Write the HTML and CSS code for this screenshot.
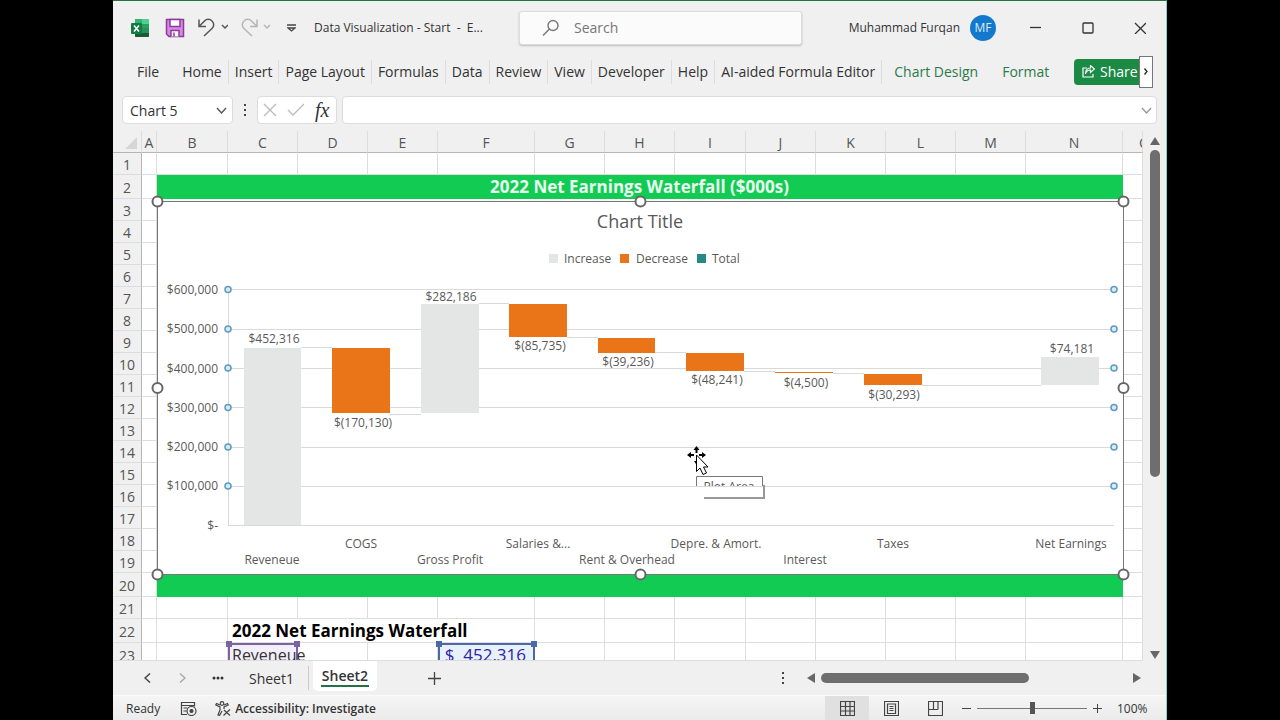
FILE: index.html
```html
<!DOCTYPE html>
<html lang="en">
<head>
  <meta charset="UTF-8">
  <title>Data Visualization - Start - Excel</title>
  <link rel="stylesheet" href="styles.css">
</head>
<body>

<div class="window">

  <!-- Title bar -->
  <header class="titlebar">
    <div class="quick-access">
      <svg class="logo" width="18" height="18" viewBox="0 0 18 18">
        <rect x="4" y="0" width="14" height="18" rx="1" fill="#21a366"/>
        <path d="M4 0h7v5H4z" fill="#2fb574"/>
        <path d="M11 0h7v5h-7z" fill="#4fd08e"/>
        <path d="M4 9h7v5H4z" fill="#107c41"/>
        <path d="M11 9h7v5h-7z" fill="#2b8f57"/>
        <path d="M4 14h14v3a1 1 0 0 1-1 1H5a1 1 0 0 1-1-1z" fill="#185c37"/>
        <rect x="0" y="4" width="11" height="11" rx="1" fill="#107c41"/>
        <path d="M3 6.500l5 6M8 6.500l-5 6" stroke="#fff" stroke-width="1.600"/>
      </svg>
      <button class="icon-btn" aria-label="Save">
        <svg width="20" height="20" viewBox="0 0 20 20" fill="none" stroke="#8e3a9d" stroke-width="1.500">
          <path d="M1.500 1.500h17v17H4l-2.500-2.500z" fill="#d58be0"/>
          <path d="M5 1.500h10v7H5z" fill="#fff"/>
          <path d="M6 18.500v-6h8v6" fill="#fff"/>
          <path d="M9 14.500v4"/>
        </svg>
      </button>
      <button class="icon-btn" aria-label="Undo">
        <svg width="32" height="20" viewBox="0 0 32 20" fill="none" stroke="#555" stroke-width="1.500">
          <path d="M3 1.500v7h7M3 8.500l5.500-5.500a5 5 0 0 1 7.500 0a5 5 0 0 1 0 7.500L8 18"/>
          <path d="M26 7l3 3 3-3"/>
        </svg>
      </button>
      <button class="icon-btn" aria-label="Redo">
        <svg width="32" height="20" viewBox="0 0 32 20" fill="none" stroke="#b5b5b5" stroke-width="1.500">
          <path d="M18 1.500v7h-7M18 8.500L12.500 3a5 5 0 0 0-7.500 0a5 5 0 0 0 0 7.500L13 18"/>
          <path d="M25 7l3 3 3-3"/>
        </svg>
      </button>
      <button class="icon-btn customize" aria-label="Customize toolbar">
        <svg width="9" height="8" viewBox="0 0 9 8" fill="none" stroke="#444" stroke-width="1.300">
          <path d="M0 1h9M1 4h7L4.500 7z"/>
        </svg>
      </button>
    </div>
    <span class="doc-name">Data Visualization - Start&nbsp; -&nbsp; E...</span>
    <label class="search">
      <svg width="18" height="18" viewBox="0 0 18 18" fill="none" stroke="#777" stroke-width="1.400">
        <circle cx="11" cy="6.500" r="5"/>
        <path d="M7.500 10L1 16.500"/>
      </svg>
      <input type="text" placeholder="Search" aria-label="Search">
    </label>
    <span class="user">Muhammad Furqan</span>
    <span class="avatar">MF</span>
    <div class="window-buttons">
      <button aria-label="Minimize"><svg width="12" height="12"><path d="M0 5.500h11"/></svg></button>
      <button aria-label="Maximize"><svg width="12" height="12"><rect x="1" y="1" width="10" height="10" rx="1"/></svg></button>
      <button aria-label="Close"><svg width="12" height="12"><path d="M1 1l11 11M12 1L1 12"/></svg></button>
    </div>
  </header>

  <!-- Ribbon tabs -->
  <nav class="ribbon">
    <a href="#">File</a>
    <a href="#" class="sep">Home</a>
    <a href="#" class="sep">Insert</a>
    <a href="#" class="sep">Page Layout</a>
    <a href="#" class="sep">Formulas</a>
    <a href="#" class="sep">Data</a>
    <a href="#" class="sep">Review</a>
    <a href="#" class="sep">View</a>
    <a href="#" class="sep">Developer</a>
    <a href="#" class="sep">Help</a>
    <a href="#" class="sep">AI-aided Formula Editor</a>
    <a href="#" class="context">Chart Design</a>
    <a href="#" class="context">Format</a>
    <div class="share-group">
      <button class="share">
        <svg width="13" height="13" viewBox="0 0 13 13" fill="none" stroke="#fff" stroke-width="1.200">
          <path d="M5 3H1v9h10V9"/>
          <path d="M3.500 9c.5-3 2-4 5-4V7.500l4-3.500-4-3.500V3c-3 0-5 2-5 6z"/>
        </svg>
        Share
      </button>
      <button class="more" aria-label="More tabs">
        <svg width="4" height="7" viewBox="0 0 4 7" fill="none" stroke="#222" stroke-width="1.300"><path d="M.5.500l2.500 3-2.500 3"/></svg>
      </button>
    </div>
  </nav>

  <!-- Name box and formula bar -->
  <div class="formula-row">
    <div class="name-box">
      <input type="text" value="Chart 5" aria-label="Name box">
      <svg width="11" height="7" viewBox="0 0 11 7" fill="none" stroke="#555" stroke-width="1.400"><path d="M1 1l4.500 5L10 1"/></svg>
    </div>
    <svg class="dots" width="4" height="14" viewBox="0 0 4 14" fill="#444"><path d="M1 1h2v2H1zM1 6h2v2H1zM1 11h2v2H1z"/></svg>
    <div class="fx-box">
      <button class="icon-btn" aria-label="Cancel"><svg width="14" height="14" viewBox="0 0 14 14" fill="none" stroke="#bbb" stroke-width="1.300"><path d="M1 1l12 12M13 1L1 13"/></svg></button>
      <button class="icon-btn" aria-label="Enter"><svg width="18" height="14" viewBox="0 0 18 14" fill="none" stroke="#bbb" stroke-width="1.300"><path d="M1 7l5 5L17 1"/></svg></button>
      <button class="icon-btn fx" aria-label="Insert function">fx</button>
    </div>
    <div class="formula">
      <input type="text" aria-label="Formula bar">
      <svg width="11" height="7" viewBox="0 0 11 7" fill="none" stroke="#999" stroke-width="1.400"><path d="M1 1l4.500 5L10 1"/></svg>
    </div>
  </div>

  <!-- Worksheet -->
  <main class="sheet">
    <div class="grid">
      <table class="cells">
        <colgroup>
          <col class="w-num"><col class="w-a"><col class="w-b"><col class="w-m"><col class="w-m"><col class="w-m"><col class="w-l">
          <col class="w-m"><col class="w-m"><col class="w-b"><col class="w-m"><col class="w-m"><col class="w-m"><col class="w-m"><col class="w-l"><col>
        </colgroup>
        <thead>
          <tr>
            <th class="corner"><svg width="12" height="12"><path d="M12 0v12H0z" fill="#d6d6d6"/></svg></th>
            <th>A</th><th>B</th><th>C</th><th>D</th><th>E</th><th>F</th><th>G</th><th>H</th><th>I</th><th>J</th><th>K</th><th>L</th><th>M</th><th>N</th><th class="cut">O</th>
          </tr>
        </thead>
        <tbody>
          <tr><th>1</th><td></td><td></td><td></td><td></td><td></td><td></td><td></td><td></td><td></td><td></td><td></td><td></td><td></td><td></td><td></td></tr>
          <tr class="tall"><th>2</th><td></td><td colspan="13" class="banner">2022 Net Earnings Waterfall ($000s)</td><td></td></tr>
          <tr><th>3</th><td></td><td colspan="13"></td><td></td></tr>
          <tr><th>4</th><td></td><td colspan="13"></td><td></td></tr>
          <tr><th>5</th><td></td><td colspan="13"></td><td></td></tr>
          <tr><th>6</th><td></td><td colspan="13"></td><td></td></tr>
          <tr><th>7</th><td></td><td colspan="13"></td><td></td></tr>
          <tr><th>8</th><td></td><td colspan="13"></td><td></td></tr>
          <tr><th>9</th><td></td><td colspan="13"></td><td></td></tr>
          <tr><th>10</th><td></td><td colspan="13"></td><td></td></tr>
          <tr><th>11</th><td></td><td colspan="13"></td><td></td></tr>
          <tr><th>12</th><td></td><td colspan="13"></td><td></td></tr>
          <tr><th>13</th><td></td><td colspan="13"></td><td></td></tr>
          <tr><th>14</th><td></td><td colspan="13"></td><td></td></tr>
          <tr><th>15</th><td></td><td colspan="13"></td><td></td></tr>
          <tr><th>16</th><td></td><td colspan="13"></td><td></td></tr>
          <tr><th>17</th><td></td><td colspan="13"></td><td></td></tr>
          <tr><th>18</th><td></td><td colspan="13"></td><td></td></tr>
          <tr><th>19</th><td></td><td colspan="13"></td><td></td></tr>
          <tr class="tall"><th>20</th><td></td><td colspan="13" class="banner"></td><td></td></tr>
          <tr><th>21</th><td></td><td></td><td></td><td></td><td></td><td></td><td></td><td></td><td></td><td></td><td></td><td></td><td></td><td></td><td></td></tr>
          <tr class="tall"><th>22</th><td></td><td></td><td colspan="4" class="heading">2022 Net Earnings Waterfall</td><td></td><td></td><td></td><td></td><td></td><td></td><td></td><td></td><td></td></tr>
          <tr class="tall"><th>23</th><td></td><td></td><td class="range label">Reveneue</td><td></td><td></td><td class="range amount">$&nbsp; 452,316</td><td></td><td></td><td></td><td></td><td></td><td></td><td></td><td></td><td></td></tr>
        </tbody>
      </table>

      <!-- Waterfall chart, floating over the cells -->
      <svg class="chart" width="967" height="374" viewBox="0 0 967 374">
        <rect class="frame" x="0.500" y="0.500" width="966" height="373"/>
        <text class="title" x="483" y="27">Chart Title</text>

        <g class="legend">
          <rect class="up" x="392" y="53" width="9" height="9"/><text x="407" y="62">Increase</text>
          <rect class="down" x="463" y="53" width="9" height="9"/><text x="479" y="62">Decrease</text>
          <rect class="total" x="540" y="53" width="9" height="9"/><text x="555" y="62">Total</text>
        </g>

        <path class="gridlines" d="M71 88.500h886M71 128.500h886M71 167.500h886M71 206.500h886M71 246.500h886M71 285.500h886M71 324.500h886M71.500 88v236"/>

        <g class="axis">
          <text x="61" y="93">$600,000</text>
          <text x="61" y="132">$500,000</text>
          <text x="61" y="172">$400,000</text>
          <text x="61" y="211">$300,000</text>
          <text x="61" y="250">$200,000</text>
          <text x="61" y="289">$100,000</text>
          <text x="61" y="329">$-</text>
        </g>

        <path class="connectors" d="M144 146.500h31M233 213.500h31M322 102.500h30M410 136.500h31M498 151.500h31M587 170.500h31M676 172.500h31M765 184.500h119"/>
        <rect class="up" x="87" y="147" width="57" height="177"/>
        <rect class="down" x="175" y="147" width="58" height="65"/>
        <rect class="up" x="264" y="103" width="58" height="109"/>
        <rect class="down" x="352" y="103" width="58" height="33"/>
        <rect class="down" x="441" y="137" width="57" height="15"/>
        <rect class="down" x="529" y="152" width="58" height="18"/>
        <rect class="down" x="618" y="171" width="58" height="1"/>
        <rect class="down" x="707" y="173" width="58" height="11"/>
        <rect class="up" x="884" y="156" width="58" height="28"/>

        <g class="labels">
          <text x="117" y="142">$452,316</text>
          <text x="206" y="226">$(170,130)</text>
          <text x="294" y="100">$282,186</text>
          <text x="383" y="149">$(85,735)</text>
          <text x="471" y="165">$(39,236)</text>
          <text x="560" y="183">$(48,241)</text>
          <text x="649" y="186">$(4,500)</text>
          <text x="737" y="198">$(30,293)</text>
          <text x="915" y="152">$74,181</text>
        </g>
        <g class="labels">
          <text x="115" y="363">Reveneue</text>
          <text x="204" y="347">COGS</text>
          <text x="293" y="363">Gross Profit</text>
          <text x="381" y="347">Salaries &amp;...</text>
          <text x="470" y="363">Rent &amp; Overhead</text>
          <text x="559" y="347">Depre. &amp; Amort.</text>
          <text x="648" y="363">Interest</text>
          <text x="736" y="347">Taxes</text>
          <text x="914" y="347">Net Earnings</text>
        </g>

        <g class="points">
          <circle cx="71" cy="88.500" r="3"/><circle cx="957" cy="88.500" r="3"/>
          <circle cx="71" cy="128" r="3"/><circle cx="957" cy="128" r="3"/>
          <circle cx="71" cy="167" r="3"/><circle cx="957" cy="167" r="3"/>
          <circle cx="71" cy="206.500" r="3"/><circle cx="957" cy="206.500" r="3"/>
          <circle cx="71" cy="246" r="3"/><circle cx="957" cy="246" r="3"/>
          <circle cx="71" cy="285" r="3"/><circle cx="957" cy="285" r="3"/>
        </g>

        <g class="handles">
          <circle cx="0.500" cy="0.500" r="5"/><circle cx="483.500" cy="0.500" r="5"/><circle cx="966.500" cy="0.500" r="5"/>
          <circle cx="0.500" cy="187" r="5"/><circle cx="966.500" cy="187" r="5"/>
          <circle cx="0.500" cy="373.500" r="5"/><circle cx="483.500" cy="373.500" r="5"/><circle cx="966.500" cy="373.500" r="5"/>
        </g>

        <!-- tooltip, half hidden -->
        <clipPath id="tip-clip"><rect x="539" y="274" width="68" height="11"/></clipPath>
        <path d="M547 297h60V284" fill="none" stroke="#999" stroke-width="2"/>
        <rect x="540" y="286" width="66" height="10" fill="#fff"/>
        <path d="M539.500 285v-9.500h66V285" fill="#fff" stroke="#777"/>
        <text class="tip" x="572" y="290" clip-path="url(#tip-clip)">Plot Area</text>

        <!-- move pointer -->
        <g class="pointer">
          <path d="M539.500 245l3 4h-2v3h-2v-3h-2zM530 254l4-3v2h3v2h-3v2zM549 254l-4-3v2h-3v2h3v2z" fill="#000"/>
          <path d="M539.500 254v16.500l3.500-3.500 3 6.500 3.500-1.500-3-6h4.500z" fill="#fff" stroke="#000"/>
          <path d="M537 260h2v3z" fill="#000"/>
        </g>
      </svg>
    </div>

    <div class="vscroll">
      <svg width="10" height="8"><path d="M5 0l5 8H0z"/></svg>
      <div class="vtrack"><div class="vthumb"></div></div>
      <svg width="10" height="8"><path d="M0 0h10L5 8z"/></svg>
    </div>
  </main>

  <!-- Sheet tabs -->
  <div class="tabs">
    <button class="icon-btn nav-btn" aria-label="Previous sheet"><svg width="7" height="10" viewBox="0 0 7 10" fill="none" stroke="#444" stroke-width="1.500"><path d="M6 .5L1 5l5 4.500"/></svg></button>
    <button class="icon-btn nav-btn" aria-label="Next sheet"><svg width="7" height="10" viewBox="0 0 7 10" fill="none" stroke="#aaa" stroke-width="1.500"><path d="M1 .5L6 5 1 9.500"/></svg></button>
    <button class="icon-btn nav-btn" aria-label="All sheets"><svg width="12" height="4" fill="#333"><circle cx="2" cy="2" r="1.500"/><circle cx="6" cy="2" r="1.500"/><circle cx="10" cy="2" r="1.500"/></svg></button>
    <button class="tab">Sheet1</button>
    <button class="tab active"><span>Sheet2</span></button>
    <button class="icon-btn add" aria-label="New sheet"><svg width="13" height="13" viewBox="0 0 13 13" stroke="#444" stroke-width="1.300"><path d="M6.500 0v13M0 6.500h13"/></svg></button>
    <svg class="dots" width="4" height="14" viewBox="0 0 4 14" fill="#444"><path d="M1 1h2v2H1zM1 6h2v2H1zM1 11h2v2H1z"/></svg>
    <div class="hscroll">
      <svg width="8" height="10"><path d="M8 0v10L0 5z"/></svg>
      <div class="htrack"><div class="hthumb"></div></div>
      <svg width="8" height="10"><path d="M0 0l8 5-8 5z"/></svg>
    </div>
  </div>

  <!-- Status bar -->
  <footer class="status">
    <span>Ready</span>
    <svg class="macro" width="17" height="15" viewBox="0 0 17 15" fill="none" stroke="#444" stroke-width="1.200">
      <path d="M7 13.500H1.500V1.500h13v4M1.500 4.500h13M3.500 7h4M3.500 10h3"/>
      <circle cx="11.500" cy="10" r="4.500"/>
      <circle cx="11.500" cy="10" r="1.500" fill="#444"/>
    </svg>
    <svg width="16" height="15" viewBox="0 0 16 15" fill="none" stroke="#444" stroke-width="1.200">
      <circle cx="7" cy="2.500" r="1.800"/>
      <path d="M5 4L1.500 2.500.8 4 5 6v3l-2 5 1.500.5L7 10M9 4l3.500-1.500.7 1.500L9 6v2"/>
      <path d="M9 9l6 5.500M15 8.500L8.500 14.500"/>
    </svg>
    <span class="access">Accessibility: Investigate</span>
    <div class="views">
      <button class="view on" aria-label="Normal view"><svg width="15" height="15"><path d="M.5.500h14v14H.5zM5.500 0v15M10 0v15M0 5.500h15M0 10h15"/></svg></button>
      <button class="view" aria-label="Page layout view"><svg width="15" height="15"><path d="M.5.500h14v14H.5zM3.500 3v9.500h8V3zM5.500 5.500h4M5.500 7.500h4M5.500 9.500h4"/></svg></button>
      <button class="view" aria-label="Page break view"><svg width="15" height="15"><path d="M.5.500h14v14H.5zM5.500 0v8.500M10 0v8.500M0 8.500h10"/></svg></button>
    </div>
    <button class="icon-btn" aria-label="Zoom out"><svg width="9" height="9" stroke="#444"><path d="M0 4.500h9"/></svg></button>
    <input class="zoom" type="range" min="0" max="100" value="50" aria-label="Zoom">
    <button class="icon-btn" aria-label="Zoom in"><svg width="9" height="9" stroke="#444"><path d="M0 4.500h9M4.500 0v9"/></svg></button>
    <span class="percent">100%</span>
  </footer>

</div>

</body>
</html>
```
FILE: styles.css
```css
* {
  box-sizing: border-box;
}

body {
  margin: 0;
  background: #000;
  color: #333;
  font-family: "Open Sans", "Noto Sans", sans-serif;
  font-size: 12px;
}

button, input {
  font: inherit;
  color: inherit;
  border: none;
  background: none;
  padding: 0;
}

svg {
  display: block;
  flex: none;
}

.window {
  display: flex;
  flex-direction: column;
  height: 100vh;
  margin: 0 113px;
  background: #f0f0f0;
  border-top: 1px solid #217346;
  border-right: 1px solid #7fd6c8;
}

.icon-btn {
  display: flex;
  align-items: center;
  justify-content: center;
}

/* Title bar */
.titlebar {
  display: flex;
  align-items: center;
  height: 53px;
}

.quick-access {
  display: flex;
  align-items: center;
  gap: 11px;
  margin-left: 18px;
}

.logo {
  margin-right: 5px;
}

.customize {
  width: 18px;
}

.doc-name {
  width: 205px;
  margin-left: 14px;
  white-space: nowrap;
}

.search {
  display: flex;
  align-items: center;
  gap: 14px;
  flex: 0 1 283px;
  height: 34px;
  padding-left: 22px;
  background: #fbfbfb;
  border: 1px solid #ddd;
  border-radius: 3px;
  box-shadow: 0 1px 2px #bbb;
}

.search input {
  width: 100%;
  font-size: 14px;
}

.search input::placeholder {
  color: #777;
}

.user {
  margin-left: auto;
}

.avatar {
  width: 26px;
  height: 26px;
  margin: 0 14px 0 10px;
  border-radius: 50%;
  background: #1479cc;
  color: #d8ecff;
  line-height: 26px;
  text-align: center;
}

.window-buttons {
  display: flex;
}

.window-buttons button {
  display: flex;
  align-items: center;
  justify-content: center;
  width: 52px;
  height: 32px;
}

.window-buttons svg {
  fill: none;
  stroke: #333;
  stroke-width: 1.3;
}

/* Ribbon */
.ribbon {
  display: flex;
  align-items: center;
  height: 35px;
  padding-left: 18px;
  font-size: 14px;
}

.ribbon a {
  padding: 0 6px;
  color: #333;
  line-height: 24px;
  text-decoration: none;
  white-space: nowrap;
}

.ribbon a:first-child {
  margin-right: 11px;
}

.ribbon .sep {
  border-right: 1px solid #ddd;
}

.ribbon .context {
  padding: 0 12px;
  color: #2c7a4b;
}

.share-group {
  display: flex;
  align-items: center;
  margin: 0 13px 0 auto;
}

.share {
  display: flex;
  align-items: center;
  gap: 5px;
  width: 65px;
  height: 26px;
  padding-left: 8px;
  background: #1b8a44;
  border-radius: 4px 0 0 4px;
  color: #fff;
}

.more {
  display: flex;
  align-items: center;
  justify-content: center;
  width: 14px;
  height: 32px;
  background: #fff;
  border: 1px solid #777;
}

/* Formula bar */
.formula-row {
  display: flex;
  align-items: center;
  height: 42px;
  padding: 0 9px;
}

.name-box, .fx-box, .formula {
  display: flex;
  align-items: center;
  height: 28px;
  background: #fff;
  border: 1px solid #dcdcdc;
  border-radius: 4px;
}

.name-box {
  width: 111px;
  padding: 0 5px 0 7px;
  font-size: 14px;
}

.name-box input, .formula input {
  flex: 1;
  min-width: 0;
}

.formula-row .dots {
  margin: 0 10px;
}

.fx-box {
  gap: 10px;
  width: 80px;
  padding-left: 5px;
}

.fx {
  font-family: "Liberation Serif", serif;
  font-size: 20px;
  font-style: italic;
}

.formula {
  flex: 1;
  margin-left: 5px;
  padding-right: 4px;
}

/* Worksheet */
.sheet {
  display: flex;
  flex: 1;
  min-height: 0;
}

.grid {
  position: relative;
  flex: 1;
  min-width: 0;
  overflow: hidden;
  border-bottom: 1px solid #ddd;
}

.cells {
  width: 100%;
  table-layout: fixed;
  border-collapse: separate;
  border-spacing: 0;
  background: #fff;
}

.w-num { width: 29px; }
.w-a { width: 15px; }
.w-b { width: 71px; }
.w-m { width: 70px; }
.w-l { width: 97px; }

.cells tr {
  height: 22px;
}

.cells .tall {
  height: 24px;
}

.cells th, .cells td {
  padding: 0;
  border-right: 1px solid #ddd;
  border-bottom: 1px solid #ddd;
  line-height: 20px;
  white-space: nowrap;
}

.cells th {
  padding-top: 2px;
  background: #f0f0f0;
  color: #555;
  font-size: 14px;
  font-weight: normal;
  line-height: 19px;
}

.cells thead th {
  border-bottom-color: #b5b5b5;
}

.cells tbody th {
  border-right-color: #b5b5b5;
}

.cells .corner svg {
  margin-left: auto;
  margin-right: 4px;
}

.cells .cut {
  padding-left: 16px;
  overflow: hidden;
  text-align: left;
}

.cells .banner {
  background: #12cb52;
  border-color: #12cb52;
  color: #e9fff0;
  font-size: 17px;
  font-weight: bold;
  text-align: center;
}

.cells .heading {
  padding-left: 4px;
  color: #000;
  font-size: 17px;
  font-weight: bold;
}

/* Cells that feed the chart, outlined while it is selected */
.cells .range {
  position: relative;
  border: 2px solid;
  border-bottom: none;
  vertical-align: top;
}

.range::before, .range::after {
  content: "";
  position: absolute;
  top: -4px;
  width: 6px;
  height: 6px;
}

.range::before {
  left: -4px;
}

.range::after {
  right: -4px;
}

.cells .label {
  padding-left: 2px;
  background: #f3effa;
  border-color: #7b62a3;
  font-size: 16px;
}

.label::before, .label::after {
  background: #7b62a3;
}

.cells .amount {
  padding-right: 7px;
  background: #e8f0fa;
  border-color: #4a69a5;
  color: #2b23a8;
  font-size: 17px;
  text-align: right;
}

.amount::before, .amount::after {
  background: #4a69a5;
}

/* Chart */
.chart {
  position: absolute;
  left: 44px;
  top: 70px;
  overflow: visible;
}

.chart text {
  fill: #595959;
  font-size: 12px;
}

.chart .title {
  font-size: 18px;
  text-anchor: middle;
}

.frame {
  fill: #fff;
  stroke: #777;
}

.up { fill: #e3e6e5; }
.down { fill: #e97518; }
.total { fill: #258a86; }

.gridlines, .connectors {
  fill: none;
  stroke: #d9d9d9;
}

.axis text {
  text-anchor: end;
}

.labels text, .chart .tip {
  text-anchor: middle;
}

.points circle {
  fill: #d5ecf7;
  stroke: #5f9bbd;
  stroke-width: 1.5;
}

.handles circle {
  fill: #fff;
  stroke: #666;
  stroke-width: 2;
}

/* Scroll bars */
.vscroll {
  display: flex;
  flex-direction: column;
  align-items: center;
  width: 23px;
  padding: 6px 0 2px;
}

.vscroll svg, .hscroll svg {
  fill: #666;
}

.vtrack {
  flex: 1;
  padding: 5px 0;
}

.vthumb {
  width: 10px;
  height: 66%;
  border-radius: 5px;
  background: #6e6e6e;
}

.hscroll {
  display: flex;
  align-items: center;
  gap: 6px;
  width: 334px;
}

.htrack {
  flex: 1;
}

.hthumb {
  width: 68%;
  height: 10px;
  border-radius: 5px;
  background: #6e6e6e;
}

/* Sheet tabs */
.tabs {
  display: flex;
  align-items: center;
  height: 35px;
  padding: 0 25px 0 17px;
  border-bottom: 1px solid #fafafa;
}

.nav-btn {
  width: 35px;
}

.tab {
  width: 74px;
  height: 24px;
  border-right: 1px solid #ccc;
  font-size: 14px;
}

.tab.active {
  align-self: flex-start;
  width: 64px;
  height: 30px;
  margin: 0 4px;
  background: #fff;
  border: none;
  border-radius: 0 0 5px 5px;
  font-weight: 600;
}

.tab.active span {
  display: block;
  margin: 0 8px;
  border-bottom: 2px solid #217346;
}

.add {
  width: 40px;
  margin-left: 33px;
}

.tabs .dots {
  margin-left: auto;
  margin-right: 22px;
}

/* Status bar */
.status {
  display: flex;
  align-items: center;
  height: 24px;
  padding: 0 19px 0 13px;
  background: linear-gradient(#f5f5f5, #ebebeb);
}

.macro {
  margin: 0 18px 0 20px;
}

.access {
  margin-left: 4px;
  font-weight: 600;
}

.views {
  display: flex;
  margin: 0 5px 0 auto;
}

.view {
  display: flex;
  align-items: center;
  justify-content: center;
  width: 44px;
  height: 24px;
}

.view.on {
  background: #e0e0e0;
}

.view svg {
  fill: none;
  stroke: #444;
  stroke-width: 1.2;
}

.zoom {
  appearance: none;
  width: 110px;
  height: 14px;
  margin: 0 6px;
  background: linear-gradient(#777, #777) center / 100% 1px no-repeat;
}

.zoom::-webkit-slider-thumb {
  appearance: none;
  width: 5px;
  height: 12px;
  background: #555;
}

.percent {
  width: 30px;
  margin-left: 15px;
}
```
